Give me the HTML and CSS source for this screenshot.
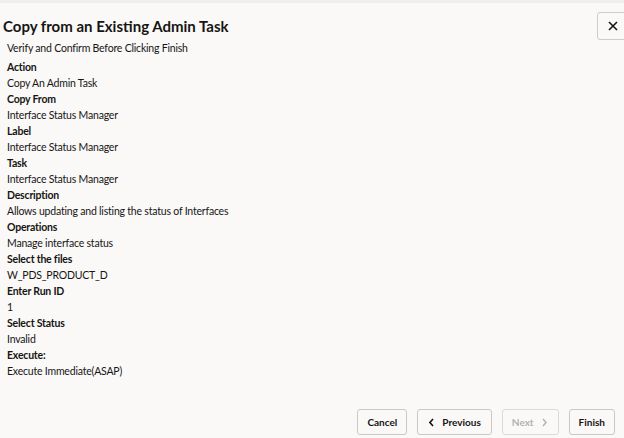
FILE: index.html
```html
<!DOCTYPE html>
<html lang="en">
<head>
  <meta charset="UTF-8">
  <meta name="viewport" content="width=device-width, initial-scale=1.0">
  <title>Copy from an Existing Admin Task</title>
  <link rel="stylesheet" href="styles.css">
</head>
<body>
  <div class="dialog">
    <div class="header">
      <h1>Copy from an Existing Admin Task</h1>
      <button class="close" aria-label="Close">
        <svg width="10" height="10" viewBox="0 0 10 10"><path d="M1 1L9 9M9 1L1 9" stroke="#161513" stroke-width="1.6" fill="none"/></svg>
      </button>
    </div>
    <div class="body">
      <p class="intro">Verify and Confirm Before Clicking Finish</p>
      <dl class="summary">
        <dt>Action</dt><dd>Copy An Admin Task</dd>
        <dt>Copy From</dt><dd>Interface Status Manager</dd>
        <dt>Label</dt><dd>Interface Status Manager</dd>
        <dt>Task</dt><dd>Interface Status Manager</dd>
        <dt>Description</dt><dd>Allows updating and listing the status of Interfaces</dd>
        <dt>Operations</dt><dd>Manage interface status</dd>
        <dt>Select the files</dt><dd>W_PDS_PRODUCT_D</dd>
        <dt>Enter Run ID</dt><dd>1</dd>
        <dt>Select Status</dt><dd>Invalid</dd>
        <dt>Execute:</dt><dd>Execute Immediate(ASAP)</dd>
      </dl>
    </div>
    <div class="footer">
      <button class="btn">Cancel</button>
      <button class="btn btn-prev">
        <svg width="5" height="9" viewBox="0 0 5 9"><path d="M4 1L0.9 4.5L4 8" stroke="#161513" stroke-width="1.6" fill="none"/></svg>
        Previous
      </button>
      <button class="btn btn-next" disabled>
        Next
        <svg width="5" height="9" viewBox="0 0 5 9"><path d="M1 1L4.1 4.5L1 8" stroke="#b3b1ae" stroke-width="1.4" fill="none"/></svg>
      </button>
      <button class="btn">Finish</button>
    </div>
  </div>
</body>
</html>
```

FILE: styles.css
```css
*{margin:0;padding:0;box-sizing:border-box;}
html,body{width:100%;height:100%;overflow:hidden;}
body{background:#faf9f8;color:#161513;font-family:Lato,"Noto Sans","Liberation Sans",sans-serif;border-top:3px solid #efeeec;}
.dialog{height:100%;display:flex;flex-direction:column;}
.header{display:flex;justify-content:space-between;align-items:center;padding:9px 0 0 3px;}
.header h1{font-size:15px;font-weight:700;line-height:28px;}
.close{width:31px;height:28px;margin-right:-4px;border:1px solid #cfcdca;border-radius:3px;background:#faf9f8;display:flex;align-items:center;justify-content:center;}
.body{padding:0 7px;font-size:10.5px;letter-spacing:-0.2px;line-height:16px;}
.intro{margin-bottom:3px;}
.summary dt{font-weight:700;}
.footer{margin-top:auto;display:flex;justify-content:flex-end;gap:10px;padding:0 9px 3px 0;}
.btn{height:26px;padding:0 9px;border:1px solid #cbc9c5;border-radius:3px;background:#faf9f8;color:#161513;font:700 10px Lato,"Noto Sans","Liberation Sans",sans-serif;display:flex;align-items:center;gap:8px;}
.btn-prev{padding:0 10px 0 11px;}
.btn-next{padding:0 11px 0 9px;color:#b3b1ae;border-color:#dddbd8;}
```
